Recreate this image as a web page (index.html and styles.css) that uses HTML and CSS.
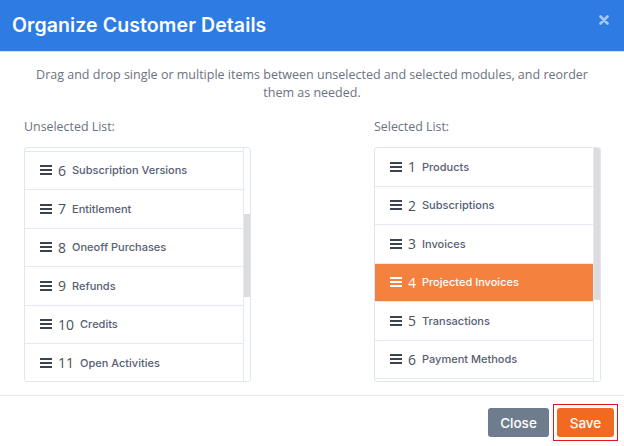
FILE: index.html
```html
<html>
    <head>
        <title>Organize Customer Details</title>
        <link rel="stylesheet" href="styles.css">
    </head>
    <body>
        <div class="modal">
            <div class="modal-header">
                <h3 class="modal-title">Organize Customer Details</h3>
                <span class="close-x">
                    <svg width="10" height="10" viewBox="0 0 10 10"><path d="M1.5 1.5 L8.5 8.5 M8.5 1.5 L1.5 8.5" stroke="#a8c7f1" stroke-width="2.6" stroke-linecap="round"/></svg>
                </span>
            </div>
            <p class="intro">Drag and drop single or multiple items between unselected and selected modules, and reorder them as needed.</p>
            <div class="lists">
                <div class="list-col">
                    <div class="list-label">Unselected List:</div>
                    <div class="list-box">
                        <ul class="sortable" id="unselected">
                            <li><span class="grip"></span><span class="num">1</span>Account Summary</li>
                            <li><span class="grip"></span><span class="num">2</span>Contacts</li>
                            <li><span class="grip"></span><span class="num">3</span>Notes</li>
                            <li><span class="grip"></span><span class="num">4</span>Orders</li>
                            <li><span class="grip"></span><span class="num">5</span>Usage</li>
                            <li><span class="grip"></span><span class="num">6</span>Subscription Versions</li>
                            <li><span class="grip"></span><span class="num">7</span>Entitlement</li>
                            <li><span class="grip"></span><span class="num">8</span>Oneoff Purchases</li>
                            <li><span class="grip"></span><span class="num">9</span>Refunds</li>
                            <li><span class="grip"></span><span class="num">10</span>Credits</li>
                            <li><span class="grip"></span><span class="num">11</span>Open Activities</li>
                            <li><span class="grip"></span><span class="num">12</span>Quotes</li>
                            <li><span class="grip"></span><span class="num">13</span>Tasks</li>
                            <li><span class="grip"></span><span class="num">14</span>Events</li>
                            <li><span class="grip"></span><span class="num">15</span>Attachments</li>
                            <li><span class="grip"></span><span class="num">16</span>Payment Runs</li>
                            <li><span class="grip"></span><span class="num">17</span>Audit Logs</li>
                        </ul>
                        <div class="scrollbar"><div class="thumb" style="margin-top: 66px; height: 83px"></div></div>
                    </div>
                </div>
                <div></div>
                <div class="list-col">
                    <div class="list-label">Selected List:</div>
                    <div class="list-box">
                        <ul class="sortable" id="selected">
                            <li><span class="grip"></span><span class="num">1</span>Products</li>
                            <li><span class="grip"></span><span class="num">2</span>Subscriptions</li>
                            <li><span class="grip"></span><span class="num">3</span>Invoices</li>
                            <li class="active"><span class="grip"></span><span class="num">4</span>Projected Invoices</li>
                            <li><span class="grip"></span><span class="num">5</span>Transactions</li>
                            <li><span class="grip"></span><span class="num">6</span>Payment Methods</li>
                            <li><span class="grip"></span><span class="num">7</span>Payments</li>
                            <li><span class="grip"></span><span class="num">8</span>Credit Memos</li>
                            <li><span class="grip"></span><span class="num">9</span>Debit Memos</li>
                        </ul>
                        <div class="scrollbar"><div class="thumb" style="margin-top: 0; height: 152px"></div></div>
                    </div>
                </div>
            </div>
            <div class="modal-footer">
                <button class="btn btn-close">Close</button>
                <span class="focus-ring"><button class="btn btn-save">Save</button></span>
            </div>
        </div>
        <script type="text/javascript">
            document.getElementById('unselected').scrollTop = 189;
        </script>
    </body>
</html>
```

FILE: styles.css
```css
body {
    margin: 0;
    background: #fff;
    font-family: "Open Sans", "Noto Sans", sans-serif;
}

.modal {
    width: 624px;
    height: 446px;
    overflow: hidden;
}

.modal-header {
    height: 51px;
    background-color: #2d7be3;
    border-bottom: 1px solid #d3e3f8;
    display: flex;
    align-items: center;
    justify-content: space-between;
    padding: 0 12px;
}

.modal-title {
    margin: -2px 0 0;
    color: #fff;
    font-family: Inter, sans-serif;
    font-size: 19.5px;
    font-weight: 600;
    letter-spacing: 0.1px;
}

.close-x {
    display: flex;
    margin-right: 3px;
    margin-top: -12px;
}

.intro {
    margin: 14px 32px 0;
    text-align: center;
    color: #6b7280;
    font-size: 12.5px;
    line-height: 18px;
}

.lists {
    display: grid;
    grid-template-columns: 227px 1fr 227px;
    padding: 0 23px 0 24px;
    margin-top: 16px;
}

.list-label {
    color: #6b7280;
    font-size: 12.4px;
    line-height: 18px;
    margin-bottom: 11px;
}

.list-box {
    display: flex;
    height: 235px;
    box-sizing: border-box;
    border: 1px solid #dfe6f0;
    border-radius: 3px;
    overflow: hidden;
}

.sortable {
    flex: 1;
    list-style: none;
    margin: 0;
    padding: 0;
    overflow: hidden;
}

.scrollbar {
    width: 6px;
    border-left: 1px solid #e3e9f2;
    background: #fff;
}

.thumb {
    background: #dcdcdc;
}

.sortable li {
    height: 38.5px;
    box-sizing: border-box;
    border-bottom: 1px solid #e3e9f2;
    display: flex;
    align-items: center;
    padding-left: 15px;
    color: #566073;
    font-family: Inter, sans-serif;
    font-size: 11px;
    font-weight: 500;
}

.sortable li.active {
    background-color: #f5813f;
    color: #fff;
}

.grip {
    width: 12px;
    height: 10px;
    margin-right: 6px;
    background: linear-gradient(#3b4250 0 2px, transparent 2px 4px, #3b4250 4px 6px, transparent 6px 8px, #3b4250 8px 10px);
}

.active .grip {
    background: linear-gradient(#fff 0 2px, transparent 2px 4px, #fff 4px 6px, transparent 6px 8px, #fff 8px 10px);
}

.num {
    font-family: "Open Sans", sans-serif;
    font-size: 14px;
    font-weight: 400;
    color: #4a5160;
    margin-right: 6px;
}

.active .num {
    color: #fff;
}

.modal-footer {
    margin-top: 13px;
    border-top: 1px solid #e4e9f0;
    display: flex;
    justify-content: flex-end;
    align-items: center;
    gap: 4px;
    padding: 8px 6px 0 0;
}

.btn {
    height: 29px;
    border: none;
    border-radius: 3px;
    color: #fff;
    font-family: Inter, sans-serif;
    font-size: 13.5px;
    font-weight: 500;
    padding: 0;
}

.btn-close {
    background-color: #6f7c8e;
    width: 61px;
}

.focus-ring {
    display: flex;
    border: 1px solid #e0161b;
    padding: 3px;
}

.btn-save {
    background-color: #f26a21;
    width: 57px;
}
```
